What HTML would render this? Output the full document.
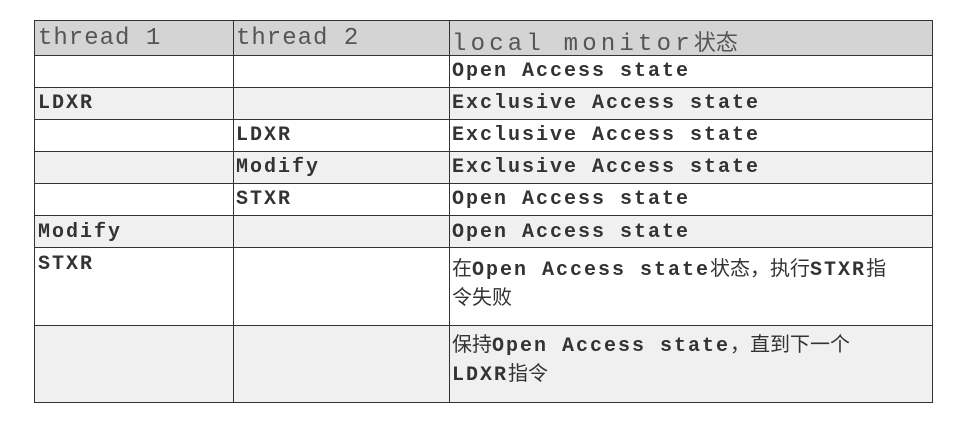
<!DOCTYPE html>
<html><head><meta charset="utf-8"><style>
body{margin:0;background:#fff;width:972px;height:427px;position:relative;font-family:"Liberation Mono","Noto Sans CJK SC",monospace;}
.r{position:absolute;left:34px;width:898px;border-top:1px solid #333;box-sizing:border-box;}
.t{position:absolute;font-weight:bold;font-size:20px;letter-spacing:2px;color:#333;white-space:nowrap;}
.h{position:absolute;font-size:24px;color:#555;letter-spacing:1px;white-space:nowrap;}
.cj{font-family:"Noto Sans CJK SC",sans-serif;font-weight:normal;letter-spacing:0;}
</style></head><body>
<div class="r" style="top:20px;height:35px;background:#d4d4d4"></div>
<div class="r" style="top:55px;height:32px;background:#fff"></div>
<div class="r" style="top:87px;height:32px;background:#f0f0f0"></div>
<div class="r" style="top:119px;height:32px;background:#fff"></div>
<div class="r" style="top:151px;height:32px;background:#f0f0f0"></div>
<div class="r" style="top:183px;height:32px;background:#fff"></div>
<div class="r" style="top:215px;height:32px;background:#f0f0f0"></div>
<div class="r" style="top:247px;height:78px;background:#fff"></div>
<div class="r" style="top:325px;height:78px;background:#f0f0f0;border-bottom:1px solid #333"></div>
<div style="position:absolute;left:34px;top:20px;width:1px;height:383px;background:#333"></div>
<div style="position:absolute;left:233px;top:20px;width:1px;height:383px;background:#333"></div>
<div style="position:absolute;left:449px;top:20px;width:1px;height:383px;background:#333"></div>
<div style="position:absolute;left:932px;top:20px;width:1px;height:383px;background:#333"></div>

<div class="h" style="left:38px;top:25px">thread 1</div>
<div class="h" style="left:236px;top:25px">thread 2</div>
<div class="h" style="left:452px;top:25px;letter-spacing:4.2px">local monitor<span class="cj" style="font-size:22px">状态</span></div>

<div class="t" style="left:452px;top:60px">Open Access state</div>
<div class="t" style="left:38px;top:92px">LDXR</div>
<div class="t" style="left:452px;top:92px">Exclusive Access state</div>
<div class="t" style="left:236px;top:124px">LDXR</div>
<div class="t" style="left:452px;top:124px">Exclusive Access state</div>
<div class="t" style="left:236px;top:156px">Modify</div>
<div class="t" style="left:452px;top:156px">Exclusive Access state</div>
<div class="t" style="left:236px;top:188px">STXR</div>
<div class="t" style="left:452px;top:188px">Open Access state</div>
<div class="t" style="left:38px;top:221px">Modify</div>
<div class="t" style="left:452px;top:221px">Open Access state</div>
<div class="t" style="left:38px;top:253px">STXR</div>
<div class="t" style="left:452px;top:252px"><span class="cj">在</span>Open Access state<span class="cj">状态，执行</span>STXR<span class="cj">指</span></div>
<div class="t" style="left:452px;top:281px"><span class="cj">令失败</span></div>
<div class="t" style="left:452px;top:328px"><span class="cj">保持</span>Open Access state<span class="cj">，直到下一个</span></div>
<div class="t" style="left:452px;top:357px">LDXR<span class="cj">指令</span></div>
</body></html>
